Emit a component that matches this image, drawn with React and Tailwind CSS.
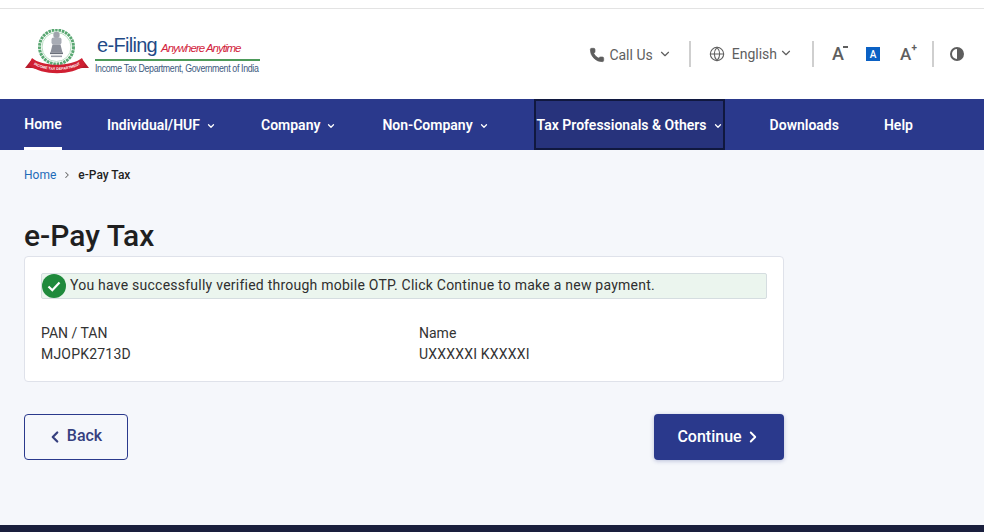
import { ChevronDown, ChevronLeft, ChevronRight, Globe, Phone } from "lucide-react";

const navItems = [
  { label: "Individual/HUF", menu: true, className: "ml-[45px] flex items-center pt-[2px]" },
  { label: "Company", menu: true, className: "ml-[45px] flex items-center pt-[2px]" },
  { label: "Non-Company", menu: true, className: "ml-[46px] flex items-center pt-[2px]" },
  {
    label: "Tax Professionals & Others",
    menu: true,
    className: "ml-[45px] flex w-[191px] items-center border-2 border-[#10183f] bg-[#27337c] pl-[1px] pt-[2px]",
  },
  { label: "Downloads", className: "ml-[45px] flex items-center pt-[2px]" },
  { label: "Help", className: "ml-[45px] flex items-center pt-[2px]" },
];

function Emblem() {
  return (
    <svg width="66" height="50" viewBox="0 0 66 50" className="shrink-0">
      <circle cx="32.5" cy="18" r="17" fill="none" stroke="#5aa873" strokeWidth="3" strokeDasharray="2.6 0.8" />
      <circle cx="32.5" cy="18" r="14.5" fill="none" stroke="#b9dfc3" strokeWidth="1" />
      <circle cx="32.5" cy="6" r="3.2" fill="#a0a4ad" />
      <rect x="27.5" y="8.5" width="10" height="7" rx="2" fill="#a8acb5" />
      <path d="M28.5 15.5h8l2 8h-12z" fill="#8b8f9a" />
      <rect x="26" y="23.5" width="13" height="1.6" fill="#6a6f7a" />
      <rect x="27" y="26.5" width="11" height="1.6" fill="#9a9ea8" />
      <path d="M1 39l7-9 5 10-5-1z" fill="#b71c2c" />
      <path d="M65 39l-7-9-5 10 5-1z" fill="#b71c2c" />
      <path d="M8 29c10 9 39 9 50 0l3 7c-13 11-43 11-56 0z" fill="#d01f32" />
      <path id="ribbonCurve" d="M7 33.5c12 10 40 10 52 0" fill="none" />
      <text fill="#fff" fontFamily="Liberation Sans, sans-serif" fontWeight="700" fontSize="3.6" textAnchor="middle">
        <textPath href="#ribbonCurve" startOffset="50%">INCOME TAX DEPARTMENT</textPath>
      </text>
    </svg>
  );
}

function Logo() {
  return (
    <div className="flex items-center">
      <Emblem />
      <div className="ml-[5px] w-[170px] font-['Liberation_Sans',sans-serif]">
        <div className="flex items-baseline pl-[2px] leading-[22px]">
          <span className="text-[20px] tracking-[-0.7px] text-[#1f4b87]">e-Filing</span>
          <span className="ml-[4px] text-[11.5px] italic tracking-[-1px] text-[#d2233c]">Anywhere Anytime</span>
        </div>
        <div className="h-[2px] w-[165px] bg-[#4d9a5a]" />
        <div className="mt-[1px] origin-left scale-x-[0.84] text-[10.5px] leading-[13px] tracking-[-0.42px] whitespace-nowrap text-[#3d5a80]">
          Income Tax Department, Government of India
        </div>
      </div>
    </div>
  );
}

function Divider({ className }) {
  return <div className={`h-[26px] w-[2px] bg-[#cfcfcf] ${className}`} />;
}

function HeaderTools() {
  return (
    <div className="flex items-center text-[14px] text-[#5e5e5e]">
      <Phone size={16} fill="#5e5e5e" strokeWidth={1} className="mr-[4px] mt-[1px]" />
      <span className="mt-[2px]">Call Us</span>
      <ChevronDown size={14} className="ml-[5px]" />
      <Divider className="ml-[17px] mr-[18px]" />
      <Globe size={16} strokeWidth={1.6} className="mr-[7px]" />
      <span>English</span>
      <ChevronDown size={14} className="ml-[2px] -mt-[3px]" />
      <Divider className="ml-[19px] mr-[18px]" />
      <span className="relative w-[16px] text-[18px] font-medium leading-none">
        A<span className="absolute right-0 top-[1px] h-[2px] w-[5px] bg-[#5e5e5e]" />
      </span>
      <span className="ml-[18px] flex h-[14px] w-[14px] items-center justify-center bg-[#0b61c4] text-[10px] font-medium text-white">A</span>
      <span className="relative ml-[20px] w-[16px] text-[17px] font-medium leading-none">
        A<span className="absolute -right-[1px] -top-[3px] text-[10px] font-bold">+</span>
      </span>
      <Divider className="ml-[16px] mr-[16px]" />
      <span className="h-[14px] w-[14px] rounded-full border-[2px] border-[#5e5e5e] bg-[linear-gradient(90deg,transparent_50%,#5e5e5e_50%)]" />
    </div>
  );
}

function NavBar() {
  return (
    <nav className="flex h-[51px] items-stretch bg-[#2a398c] pl-[24px] text-[14px] font-semibold text-white">
      <a className="flex w-[38px] items-center justify-center border-b-[3px] border-white pt-[2px]">Home</a>
      {navItems.map((item) => (
        <a key={item.label} className={item.className}>
          {item.label}
          {item.menu && <ChevronDown size={10} strokeWidth={3} className="ml-[6px] mt-[1px]" />}
        </a>
      ))}
    </nav>
  );
}

export default function App() {
  return (
    <div className="flex h-[532px] flex-col overflow-hidden bg-[#f5f7fb] font-['Roboto',sans-serif]">
      <div className="h-[9px] border-b border-[#e3e3e3] bg-white" />
      <header className="flex h-[90px] items-center justify-between bg-white pl-[24px] pr-[20px]">
        <Logo />
        <HeaderTools />
      </header>
      <NavBar />
      <main className="flex-1 px-[24px]">
        <div className="flex h-[50px] items-center text-[12px]">
          <a className="text-[#1e6bb8]">Home</a>
          <ChevronRight size={10} strokeWidth={2.5} className="ml-[6px] mr-[6px] text-[#666]" />
          <span className="font-medium text-[#1f1f1f]">e-Pay Tax</span>
        </div>
        <h1 className="mt-[17px] text-[30px] font-medium leading-[38px] text-[#1f1f1f]">e-Pay Tax</h1>
        <section className="mt-[1px] h-[126px] w-[760px] rounded-[4px] border border-[#dfe2ea] bg-white px-[16px] pt-[16px]">
          <div className="flex h-[26px] items-center rounded-[2px] border border-[#d5dde0] bg-[#ebf5ee] text-[14px] tracking-[0.24px] text-[#2f2f2f]">
            <svg width="24" height="24" viewBox="0 0 24 24" className="mr-[4px] shrink-0">
              <circle cx="12" cy="12" r="12" fill="#1f8a3c" />
              <path d="M6.5 12.5l3.8 3.7 7.2-7.6" fill="none" stroke="#fff" strokeWidth="2.2" />
            </svg>
            <span className="pb-[2px]">You have successfully verified through mobile OTP. Click Continue to make a new payment.</span>
          </div>
          <div className="mt-[24px] flex text-[14px] leading-[21px] text-[#333]">
            <div className="w-[378px]">
              <div>PAN / TAN</div>
              <div className="tracking-[0.2px]">MJOPK2713D</div>
            </div>
            <div>
              <div>Name</div>
              <div className="tracking-[0.2px]">UXXXXXI KXXXXI</div>
            </div>
          </div>
        </section>
        <div className="mt-[32px] flex w-[760px] justify-between">
          <button className="flex h-[46px] w-[104px] items-center justify-center rounded-[4px] border border-[#2a398c] pb-[2px] pr-[4px] text-[16px] font-medium text-[#36407f]">
            <ChevronLeft size={18} strokeWidth={3} className="mr-[3px] mt-[2px]" />
            Back
          </button>
          <button className="flex h-[46px] w-[130px] items-center justify-center rounded-[4px] bg-[#2a398c] pl-[1px] text-[16px] font-medium text-white shadow-[0_1px_4px_rgba(42,57,140,0.3)]">
            Continue
            <ChevronRight size={18} strokeWidth={2.5} className="ml-[2px]" />
          </button>
        </div>
      </main>
      <footer className="h-[7px] bg-[#1a1f3d]" />
    </div>
  );
}
